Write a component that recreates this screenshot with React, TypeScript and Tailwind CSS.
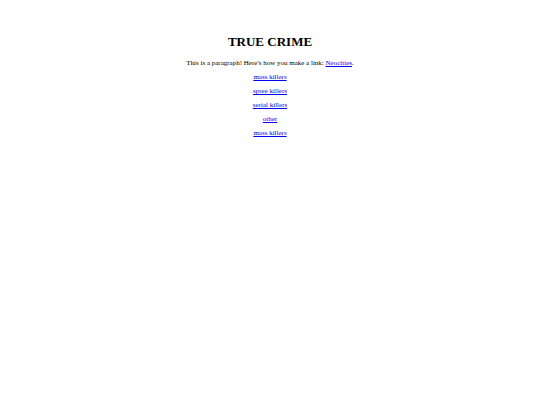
import React from 'react';

const links = [
  { label: 'mass killers', href: '#mass-killers' },
  { label: 'spree killers', href: '#spree-killers' },
  { label: 'serial killers', href: '#serial-killers' },
  { label: 'other', href: '#other' },
  { label: 'mass killers', href: '#mass-killers-2' },
];

const App: React.FC = () => {
  return (
    <main className="bg-white px-2 pt-[34px] text-center font-['Liberation_Serif',serif] text-[7px] leading-[8px] text-black">
      <h1 className="mb-[9px] text-[13px] leading-[16px] font-bold">TRUE CRIME</h1>

      <p className="mb-[6px]">
        This is a paragraph! Here's how you make a link:{' '}
        <a href="#neocities" className="text-[#0000ee] underline">Neocities</a>.
      </p>

      {links.map((link) => (
        <p key={link.href} className="mb-[6px]">
          <a href={link.href} className="text-[#0000ee] underline">{link.label}</a>
        </p>
      ))}
    </main>
  );
};

export default App;
